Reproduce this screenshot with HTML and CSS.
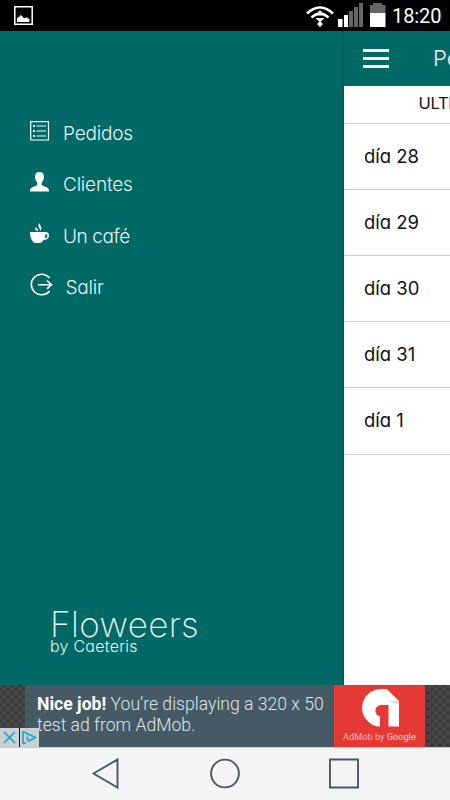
FILE: index.html
```html
<!DOCTYPE html>
<html lang="es">
<head>
<meta charset="utf-8">
<title>Floweers</title>
<link rel="stylesheet" href="styles.css">
</head>
<body>
<div class="phone">
  <header class="status">
    <svg class="picture" width="19" height="19" viewBox="0 0 19 19"><path d="M.8.8h17.4v17.4H.8z" fill="none" stroke="#fff" stroke-width="1.5"/><path d="M3 16v-4l2-1 1.500-2 2 1.500 1.500 2 2-1 1.500 0 1 1.500 1 0v3z" fill="#fff"/></svg>
    <svg class="wifi" width="28" height="22" viewBox="0 0 28 22"><g fill="none" stroke="#fff" stroke-width="2.500"><path d="M1 7.500Q14-4.500 27 7.500"/><path d="M5.500 11.500Q14 3.500 22.500 11.500"/></g><path d="M14 4l4.500 5.500h-9zM9.500 12h9L14 16.500zM14 15l3 3-3 3-3-3z" fill="#fff"/></svg>
    <svg class="signal" width="26" height="24" viewBox="0 0 26 24"><path d="M0 16h4.500v8H0zM6 12h4v12H6z" fill="#fff"/><path d="M11 8h4v16h-4zM16 4h4v20h-4zM21 0h4v24h-4z" fill="#666"/></svg>
    <svg class="battery" width="16" height="24" viewBox="0 0 16 24"><path d="M3 0h9v2h3.500v8H0V2h3z" fill="#666"/><path d="M0 10h15.500v14H0z" fill="#fff"/></svg>
    <span class="clock">18:20</span>
  </header>

  <div class="app">
    <nav class="drawer">
      <ul class="menu">
        <li><svg width="20" height="20" viewBox="0 0 20 20"><path d="M.7.7h17.800v18.300H.7z" fill="none" stroke="#fff" stroke-width="1.200"/><path d="M3 5h2M3 10h2M3 15h2" stroke="#fff" stroke-width="2"/><path d="M6.500 5h9.500M6.500 10h9.500M6.500 15h9.500" stroke="#fff" stroke-width="1.100"/></svg><span>Pedidos</span></li>
        <li><svg width="20" height="20" viewBox="0 0 20 20"><path d="M9.500 0C6.300 0 4.800 2 5 5c.1 2.500 1 4 2.300 5.500v2.700L1.800 15.500C.5 16.200 0 17.500 0 19.500h19c0-2-.5-3.300-1.800-4l-5.500-2.300v-2.700C13.100 9 13.900 7.500 14 5 14.200 2 12.700 0 9.500 0z" fill="#fff"/></svg><span>Clientes</span></li>
        <li class="coffee"><svg width="20" height="21" viewBox="0 0 20 21"><path d="M0 9h15c3 0 4.500 1.200 4 4-.4 2.800-2.700 4-5.500 4-1 1.600-2 3-3.500 3H6C2.500 20 0 15 0 9zm14.800 6.300c1.500 0 2.500-.8 2.600-2.200.1-1.500-.7-2.200-2-2.200 0 1.800-.1 3-.6 4.400z" fill="#fff" fill-rule="evenodd"/><path d="M7.500 8.300C5.500 6.800 4 5.500 5.800 4c0 1.700 3.700 2.200 1.700 4.300zM9.700 8.300C11.700 5.500 6 4.200 9.500 0c-.2 2.500 4.200 4.500.2 8.300z" fill="#fff"/></svg><span>Un café</span></li>
        <li class="exit"><svg width="23" height="24" viewBox="0 0 23 24"><path d="M19.600 5A10.300 10.300 0 1 0 19.600 18M8 11.700h13.300M17 7.500l4.500 4.200-4.500 4.200" fill="none" stroke="#fff" stroke-width="1.600"/></svg><span>Salir</span></li>
      </ul>
      <div class="brand">
        <div class="name">Floweers</div>
        <div class="byline">by Caeteris</div>
      </div>
    </nav>
    <main class="page">
      <div class="toolbar"><div class="burger"><i></i><i></i><i></i></div><span class="title">Pedidos</span></div>
      <div class="caption">ULTIMOS</div>
      <div class="day">día 28</div>
      <div class="day">día 29</div>
      <div class="day">día 30</div>
      <div class="day">día 31</div>
      <div class="day">día 1</div>
    </main>
  </div>

  <div class="ad">
    <div class="copy"><div><b>Nice job!</b> You’re displaying a 320 x 50</div><div class="second">test ad from AdMob.</div></div>
    <div class="admob">
      <svg width="38" height="38" viewBox="0 0 38 38"><path d="M38 37.500H27.500V16H20a5.700 5.700 0 0 0-1 11.300V37.500A19 18.700 0 0 1 15 .8Q21-.5 26 .3L38 12z" fill="#fff"/><path d="M26 11.500L38 12v3.500z" fill="#ddd"/></svg>
      <span>AdMob by <b>Google</b></span>
    </div>
    <div class="choices">
      <svg width="19" height="19" viewBox="0 0 19 19"><path d="M4 4l11 11M15 4L4 15" stroke="#13a9cf" stroke-width="1.700"/></svg>
      <svg width="19" height="19" viewBox="0 0 19 19"><path d="M6 15l-3 .5V3.500L15.500 9.500 8 13.500" fill="none" stroke="#13a9cf" stroke-width="1.600" stroke-linejoin="round"/><path d="M7.500 6v1.600M7.500 8.500v4" stroke="#13a9cf" stroke-width="1.600"/></svg>
    </div>
  </div>

  <footer class="softkeys">
    <svg width="28" height="31" viewBox="0 0 28 31"><path d="M1.500 15.500L25.500 1.500v28z" fill="none" stroke="#455a64" stroke-width="1.900"/></svg>
    <svg width="30" height="31" viewBox="0 0 30 31"><circle cx="15" cy="15.500" r="13.900" fill="none" stroke="#455a64" stroke-width="1.900"/></svg>
    <svg width="30" height="31" viewBox="0 0 30 31"><path d="M1 1.500h28v28H1z" fill="none" stroke="#455a64" stroke-width="1.900"/></svg>
  </footer>
</div>
</body>
</html>
```
FILE: styles.css
```css
* { box-sizing: border-box; }
body { margin: 0; overflow: hidden; font-family: Inter, "Liberation Sans", sans-serif; font-feature-settings: "cv11"; }
svg { display: block; flex: none; }
.phone { width: 450px; height: 800px; display: flex; flex-direction: column; overflow: hidden; }

.status { height: 31px; flex: none; background: #000; color: #fff; display: flex; align-items: flex-start; padding-left: 14px; }
.picture { margin-top: 6px; }
.wifi { margin: 6px 0 0 273px; }
.signal { margin: 3px 0 0 4px; }
.battery { margin: 3px 0 0 6px; }
.clock { margin-left: 6px; font: 400 20px/33px Roboto, sans-serif; letter-spacing: -.1px; }

.app { height: 654px; flex: none; display: flex; overflow: hidden; }
.drawer { width: 343.500px; flex: none; background: #006966; color: #e9f3f2; display: flex; flex-direction: column; justify-content: space-between; padding: 77px 0 30px 30px; font-weight: 300; }
.menu { list-style: none; margin: 0; padding: 0; }
.menu li { height: 51.300px; display: flex; align-items: center; gap: 13px; font-size: 19px; line-height: 24px; letter-spacing: -.2px; }
.menu li svg { margin-top: -5px; }
.menu li.coffee svg { margin-top: -6px; }
.menu li.coffee { letter-spacing: -.4px; }
.menu li.exit svg { margin-left: -.5px; }
.menu li span { margin-top: 1px; }
.brand { padding-left: 20px; white-space: nowrap; }
.name { font-size: 35px; line-height: 36px; font-weight: 250; letter-spacing: .4px; }
.byline { font-size: 16px; line-height: 18px; margin-top: -5px; letter-spacing: .25px; }

.page { width: 107px; flex: none; background: #fff; color: #111; overflow: hidden; white-space: nowrap; box-shadow: 0 0 3px rgba(0, 0, 0, .5); }
.toolbar { height: 55px; background: #006966; color: #e9f3f2; display: flex; align-items: center; padding-left: 19.500px; }
.burger { width: 26px; display: flex; flex-direction: column; gap: 5px; flex: none; }
.burger i { height: 3px; background: #fff; }
.title { margin-left: 44px; margin-top: -2px; font-size: 22px; font-weight: 300; }
.caption { height: 37.700px; border-bottom: 1px solid #d0d0d0; padding-left: 75px; font-size: 16.500px; line-height: 34px; letter-spacing: -.3px; }
.day { height: 66.200px; border-bottom: 1px solid #ccc; padding-left: 20.500px; font-size: 18.500px; line-height: 65px; }

.ad { height: 63px; flex: none; position: relative; display: flex; padding: 0 25px; border-bottom: 1px solid #c4cccf; background-color: #333; background-image: radial-gradient(circle, #484848 35%, transparent 60%), radial-gradient(circle, #484848 35%, transparent 60%); background-size: 8px 8px; background-position: 0 0, 4px 4px; font-family: Roboto, sans-serif; }
.copy { width: 309px; flex: none; background: #455a64; color: #dfe6e9; padding: 9px 0 0 12px; font-size: 17.600px; font-weight: 300; line-height: 21px; white-space: nowrap; }
.copy b { color: #fff; font-weight: 700; }
.admob { width: 91px; flex: none; background: #e53935; color: #f9b9b4; display: flex; flex-direction: column; align-items: center; padding-top: 4px; font-size: 9.200px; line-height: 20px; }
.admob b { font-weight: 500; }
.choices { position: absolute; left: 0; bottom: 0; display: flex; gap: 1px; background: #111; }
.choices svg { background: #cbd0d2; }

.softkeys { height: 52px; flex: none; background: #f5f5f5; display: flex; align-items: center; padding: 0 0 2px 92px; }
.softkeys svg:nth-child(2) { margin-left: 90px; }
.softkeys svg:nth-child(3) { margin-left: 89px; }
```
